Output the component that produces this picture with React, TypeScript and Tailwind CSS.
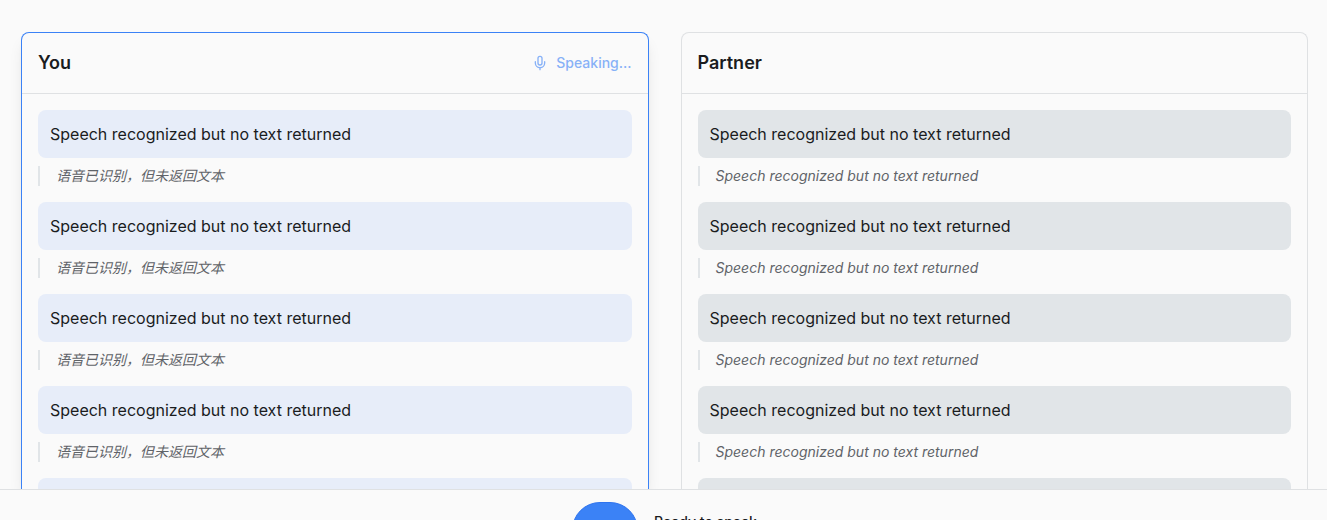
import React from "react";
import { Mic } from "lucide-react";

type PanelProps = {
  title: string;
  translation: string;
  speaking?: boolean;
};

const messages = [1, 2, 3, 4, 5];
const recognized = "Speech recognized but no text returned";

function Panel({ title, translation, speaking = false }: PanelProps) {
  return (
    <section
      className={`min-w-0 flex-1 overflow-clip rounded-t-lg border border-b-0 ${
        speaking ? "border-[#3b82f6] shadow-lg" : "border-[#dfe1e3]"
      }`}
    >
      <header className="flex items-center justify-between border-b border-[#dfe1e3] p-4">
        <h2 className="text-lg font-semibold leading-7">{title}</h2>
        {speaking && (
          <div className="flex items-center gap-2 text-sm font-medium text-[#3b82f6] opacity-60">
            <Mic size={16} aria-hidden="true" />
            <span>Speaking...</span>
          </div>
        )}
      </header>
      <ul className="flex flex-col gap-4 p-4">
        {messages.map((id) => (
          <li key={id} className="flex flex-col gap-2">
            <p className={`rounded-lg p-3 text-base leading-6 ${speaking ? "bg-[#e7edf9]" : "bg-[#e1e5e8]"}`}>
              {recognized}
            </p>
            <p className="border-l-2 border-[#e1e5e8] pl-4 text-sm italic leading-5 text-[#5f6368]">{translation}</p>
          </li>
        ))}
      </ul>
    </section>
  );
}

export default function App() {
  return (
    <div className="flex h-screen flex-col overflow-hidden bg-[#fafafa] font-['Inter','Noto_Sans_CJK_SC',sans-serif] text-[#1a1c1e]">
      <main className="flex min-h-0 flex-1 gap-8 overflow-hidden pt-8 pr-[19px] pl-[21px]">
        <Panel title="You" translation="语音已识别，但未返回文本" speaking />
        <Panel title="Partner" translation="Speech recognized but no text returned" />
      </main>
      <footer className="h-[31px] shrink-0 overflow-hidden border-t border-[#dfe1e3] bg-[#fafafa] pt-3 pr-[19px] pl-[21px]">
        <div className="flex items-start justify-center gap-4">
          <button
            type="button"
            aria-label="Start speaking"
            className="h-14 w-[66px] rounded-full border border-[#2f74ee] bg-[#3b82f6]"
          />
          <p className="pt-2.5 text-sm font-medium leading-5">Ready to speak</p>
        </div>
      </footer>
    </div>
  );
}
